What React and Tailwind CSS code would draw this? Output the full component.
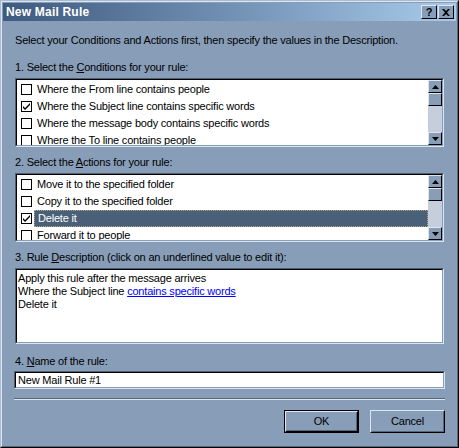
import React from "react";

const font = { fontFamily: '"Liberation Sans", Arial, sans-serif', letterSpacing: "-0.2px" };

function Check({ checked }) {
  return (
    <div className="w-[11px] h-[11px] border border-black bg-white shrink-0 flex items-center justify-center">
      {checked && (
        <svg width="9" height="9" viewBox="0 0 9 9">
          <path d="M1 4 L3 6 L8 1 L8 3 L3 8 L1 6 Z" fill="#000" />
        </svg>
      )}
    </div>
  );
}

function Arrow({ up }) {
  return (
    <svg width="7" height="4" viewBox="0 0 7 4">
      {up ? <path d="M3.5 0 L7 4 L0 4 Z" fill="#000" /> : <path d="M0 0 L7 0 L3.5 4 Z" fill="#000" />}
    </svg>
  );
}

function SBtn({ children }) {
  return (
    <div className="h-[13px] w-full border border-t-[#dde6f0] border-l-[#dde6f0] border-b-black border-r-black bg-[#889eb8] flex items-center justify-center">
      {children}
    </div>
  );
}

function Scrollbar() {
  return (
    <div className="w-[14px] h-full bg-[#c6cede] flex flex-col shrink-0">
      <SBtn>
        <Arrow up />
      </SBtn>
      <SBtn />
      <div className="flex-1" />
      <SBtn>
        <Arrow />
      </SBtn>
    </div>
  );
}

function Sunken({ className = "", children }) {
  return (
    <div className={"border border-t-[#4e5e74] border-l-[#4e5e74] border-b-[#dce4ee] border-r-[#dce4ee] " + className}>
      <div className="w-full h-full border border-t-black border-l-black border-b-[#889eb8] border-r-[#889eb8] bg-white flex">
        {children}
      </div>
    </div>
  );
}

function List({ items }) {
  return (
    <Sunken className="h-[69px] mx-[12px]">
      <div className="flex-1 pt-[1px] overflow-hidden">
        {items.map((it, i) => (
          <div key={i} className="h-[17px] flex items-center pl-[4px]">
            <Check checked={it.checked} />
            <div
              className={
                "ml-[2px] h-[17px] flex items-center flex-1 pl-[3px] " +
                (it.selected ? "bg-[#4a6078] text-white border border-dotted border-[#b9a888]" : "")
              }
            >
              {it.text}
            </div>
          </div>
        ))}
      </div>
      <Scrollbar />
    </Sunken>
  );
}

function Label({ pre, u, post, className = "" }) {
  return (
    <div className={"h-[13px] leading-[13px] ml-[12px] " + className}>
      {pre}
      <span className="underline">{u}</span>
      {post}
    </div>
  );
}

function Btn({ children, def }) {
  return (
    <div className={"h-[23px] w-[75px] " + (def ? "border border-black" : "")}>
      <div className="w-full h-full border border-t-[#dde6f0] border-l-[#dde6f0] border-b-black border-r-black">
        <div className="w-full h-full border border-t-[#889eb8] border-l-[#889eb8] border-b-[#56667c] border-r-[#56667c] flex items-center justify-center">
          {children}
        </div>
      </div>
    </div>
  );
}

function TitleBtn({ children }) {
  return (
    <div className="w-[16px] h-[14px] bg-[#889eb8] border border-t-[#dde6f0] border-l-[#dde6f0] border-b-black border-r-black flex items-center justify-center font-bold text-[11px] leading-none text-black">
      {children}
    </div>
  );
}

export default function App() {
  return (
    <div
      style={font}
      className="w-[459px] h-[448px] bg-[#889eb8] text-[11px] text-black border border-t-[#aabcd0] border-l-[#aabcd0] border-b-black border-r-black flex flex-col"
    >
      <div className="border border-t-[#dde6f0] border-l-[#dde6f0] border-b-[#56667c] border-r-[#56667c] flex-1 flex flex-col p-[1px]">
        <div className="h-[18px] bg-gradient-to-r from-[#3e5a7e] to-[#a8cbeb] flex items-center pl-[3px] pr-[2px]">
          <div className="text-white font-bold text-[12px] tracking-[0.2px] flex-1">New Mail Rule</div>
          <TitleBtn>?</TitleBtn>
          <div className="w-[1px]" />
          <TitleBtn>
            <svg width="8" height="7" viewBox="0 0 8 7">
              <path d="M0 0 L2 0 L4 2 L6 0 L8 0 L5 3.5 L8 7 L6 7 L4 5 L2 7 L0 7 L3 3.5 Z" fill="#000" />
            </svg>
          </TitleBtn>
        </div>

        <div className="flex flex-col">
          <div className="h-[13px] leading-[13px] ml-[12px] mt-[13px]">
            Select your Conditions and Actions first, then specify the values in the Description.
          </div>

          <Label pre="1. Select the " u="C" post="onditions for your rule:" className="mt-[14px]" />
          <div className="mt-[4px]">
            <List
              items={[
                { text: "Where the From line contains people" },
                { text: "Where the Subject line contains specific words", checked: true },
                { text: "Where the message body contains specific words" },
                { text: "Where the To line contains people" },
              ]}
            />
          </div>

          <Label pre="2. Select the " u="A" post="ctions for your rule:" className="mt-[9px]" />
          <div className="mt-[4px]">
            <List
              items={[
                { text: "Move it to the specified folder" },
                { text: "Copy it to the specified folder" },
                { text: "Delete it", checked: true, selected: true },
                { text: "Forward it to people" },
              ]}
            />
          </div>

          <Label pre="3. Rule " u="D" post="escription (click on an underlined value to edit it):" className="mt-[9px]" />
          <div className="mt-[4px]">
            <Sunken className="h-[76px] mx-[12px]">
              <div className="pl-[1px] pt-[2px] leading-[13px]">
                <div>Apply this rule after the message arrives</div>
                <div>
                  Where the Subject line <span className="text-[#0000ff] underline">contains specific words</span>
                </div>
                <div>Delete it</div>
              </div>
            </Sunken>
          </div>

          <Label pre="4. " u="N" post="ame of the rule:" className="mt-[11px]" />
          <div className="mt-[3px]">
            <Sunken className="h-[18px] mx-[11px]">
              <div className="pl-[2px] flex items-center">New Mail Rule #1</div>
            </Sunken>
          </div>

          <div className="mt-[9px] mx-[11px] h-[2px] border-t border-t-[#56667c] border-b border-b-[#dce4ee]" />

          <div className="mt-[10px] mx-[11px] flex justify-end gap-[11px]">
            <Btn def>OK</Btn>
            <Btn>Cancel</Btn>
          </div>
        </div>
      </div>
    </div>
  );
}
